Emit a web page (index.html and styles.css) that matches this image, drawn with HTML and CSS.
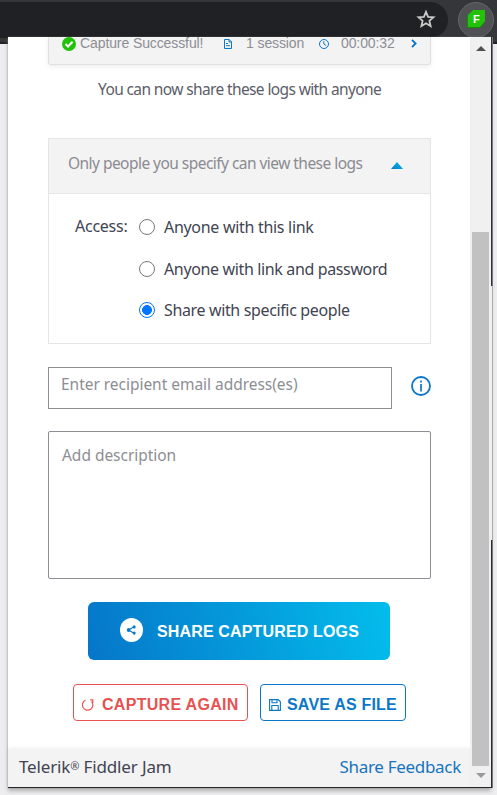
FILE: index.html
```
<!DOCTYPE html>
<html lang="en">
<head>
<meta charset="utf-8">
<title>Fiddler Jam</title>
<link rel="stylesheet" href="styles.css">
</head>
<body>
<header class="toolbar">
  <div class="omnibox">
    <svg class="star" viewBox="0 0 20 20" width="20" height="20"><path d="M10 2.8 12.1 7.8 17.5 8.3 13.4 11.8 14.6 17.1 10 14.3 5.4 17.1 6.6 11.8 2.5 8.3 7.9 7.8Z"/></svg>
  </div>
  <div class="extension">
    <svg viewBox="0 0 20 20" width="20" height="20"><path fill="#128a08" d="M6 2 1 7v12h13l4-5V2z"/><path fill="#22c20b" d="M7 1h12v11l-5 6H2V6z"/><text class="ext-letter" x="7" y="14">F</text></svg>
  </div>
</header>
<div class="page">
  <main class="popup">
    <div class="view">
      <div class="content">
        <section class="status">
          <svg class="ok" viewBox="0 0 14 14" width="14" height="14"><circle cx="7" cy="7" r="7" fill="#22c20b"/><path d="m3.5 7 2.5 2.5 4.6-4.8" fill="none" stroke="#fff" stroke-width="2"/></svg>
          <span class="captured">Capture Successful!</span>
          <svg class="doc" viewBox="0 0 8 10" width="8" height="10"><path d="M.5.5h4.7l2.3 2.4v6.6h-7zM5 .5V3h2.5M2 4.5h2M2 6.7h4" fill="none" stroke="#0a77c9"/></svg>
          <span class="sessions">1 session</span>
          <svg class="clock" viewBox="0 0 10 10" width="10" height="10"><circle cx="5" cy="5" r="4.5" fill="none" stroke="#0a77c9"/><path d="M4.8 2.2V5l2.4 1.6" fill="none" stroke="#0a77c9"/></svg>
          <span class="time">00:00:32</span>
          <svg class="chevron" viewBox="0 0 6 9" width="6" height="9"><path d="m1 .9 3.6 3.6L1 8.1" fill="none" stroke="#0a77c9" stroke-width="1.9"/></svg>
        </section>
        <p class="intro"><span>You can now share these logs with anyone</span></p>
        <section class="access">
          <div class="access-head"><span class="access-title">Only people you specify can view these logs</span>
            <svg class="caret" viewBox="0 0 12 7" width="12" height="7"><defs><linearGradient id="g" x1="0" y1="1" x2="1" y2="0"><stop stop-color="#0878cc"/><stop offset="1" stop-color="#04bdec"/></linearGradient></defs><path d="M6 0 12 7H0z" fill="url(#g)"/></svg>
          </div>
          <div class="access-body">
            <span class="access-label">Access:</span>
            <div class="options">
              <label class="option"><i class="radio"></i><span class="o1">Anyone with this link</span></label>
              <label class="option"><i class="radio"></i><span class="o2">Anyone with link and password</span></label>
              <label class="option"><i class="radio checked"></i><span class="o3">Share with specific people</span></label>
            </div>
          </div>
        </section>
        <div class="recipient">
          <div class="email"><span>Enter recipient email address(es)</span></div>
          <svg class="info" viewBox="0 0 20 20" width="20" height="20"><circle cx="10" cy="10" r="9" fill="none" stroke="#0a77c9" stroke-width="1.8"/><path d="M10 8v7.5M10 4.5v1.9" stroke="#0a77c9" stroke-width="1.7"/></svg>
        </div>
        <div class="description"><span>Add description</span></div>
        <button class="share">
          <svg viewBox="0 0 24 24" width="23" height="24" preserveAspectRatio="none"><circle cx="12" cy="12" r="12" fill="#fff"/><path d="m15 8.6-6 3.4 6 3.4" fill="none" stroke="#0878cc" stroke-width="1.2"/><circle cx="9" cy="12" r="1.9" fill="#0878cc"/><circle cx="14.8" cy="8.9" r="1.6" fill="#0878cc"/><circle cx="14.8" cy="15.1" r="1.6" fill="#0878cc"/></svg>
          <span>SHARE CAPTURED LOGS</span>
        </button>
        <div class="actions">
          <button class="again">
            <svg viewBox="0 0 12 12" width="12" height="12"><path d="M3.6 1.2A5.2 5.2 0 1 0 9.6 2.6M8.2.9h2.6v2.8" fill="none" stroke="#e85252" stroke-width="1.2"/></svg>
            <span>CAPTURE AGAIN</span>
          </button>
          <button class="save">
            <svg viewBox="0 0 12 12" width="12" height="12"><path d="M.6.6h8.6l2.2 2.2v8.6H.6zM3 .6v3.2h5V.6M2.8 11.4V6.5h6.4v4.9" fill="none" stroke="#0a77c9" stroke-width="1.1"/></svg>
            <span>SAVE AS FILE</span>
          </button>
        </div>
      </div>
      <footer class="footer"><span class="brand">Telerik<span class="reg">®</span> Fiddler Jam</span><a class="feedback">Share Feedback</a></footer>
    </div>
    <div class="scrollbar"><i class="up"></i><i class="thumb"></i><i class="down"></i></div>
  </main>
  <div class="edge"><i class="edge-top"></i><i class="edge-mid"></i><i class="edge-end"></i></div>
</div>
</body>
</html>
```
FILE: styles.css
```
* { box-sizing: border-box; }
body { margin: 0; width: 497px; height: 795px; overflow: hidden; background: #eeeef0; font-family: "Noto Sans", sans-serif; }
svg { display: block; flex: none; }
span, a { white-space: nowrap; }
button { font-family: "Liberation Sans", sans-serif; font-weight: 700; padding: 0; display: flex; align-items: center; }

.toolbar { height: 44px; background: #35363a; border-bottom: 2px solid #222326; display: flex; }
.omnibox { width: 448px; height: 36px; margin-top: 2px; background: #202124; border-radius: 0 18px 18px 0; display: flex; justify-content: flex-end; padding: 7px 12px 0 0; }
.star path { fill: none; stroke: #c8c8c8; stroke-width: 1.8; }
.extension { width: 36px; height: 36px; margin: 2px 0 0 10px; border-radius: 50%; background: #505155; border: 1px solid #66676b; padding: 6px 0 0 7px; }
.ext-letter { font: 700 11px "Liberation Sans", sans-serif; fill: #fff; }

.page { display: flex; margin: -7px 0 0 8px; position: relative; }
.popup { width: 483px; height: 751px; display: flex; background: #fff; border-bottom: 1px solid #26272b; box-shadow: 0 0 1px #777, 0 3px 4px #8889; }
.view { width: 462px; height: 750px; display: flex; flex-direction: column; }
.content { flex: 1; padding: 0 39px 0 40px; }
.edge { width: 2px; height: 751px; display: flex; flex-direction: column; }
.edge-top { height: 249px; background: #303136; border-right: 1px solid #77787b; }
.edge-mid { height: 254px; background: #f0f0f2; border-right: 1px solid #aaa; }
.edge-end { flex: 1; background: #292a2e; border-right: 1px solid #77787b; }

.status { height: 28px; display: flex; align-items: flex-start; background: #f3f3f3; border: 1px solid #e0e0e0; border-top: 0; border-radius: 0 0 3px 3px; box-shadow: 0 2px 5px #0001; padding-left: 13px; color: #8d8e94; font: 14px/14px "Liberation Sans", sans-serif; }
.status span { margin-top: -1px; }
.captured { width: 124px; margin-left: 4px; letter-spacing: -.1px; }
.doc { margin: 2px 0 0 20px; }
.sessions { width: 60px; margin-left: 14px; letter-spacing: -.1px; }
.clock { margin: 2px 0 0 13px; }
.time { width: 56px; margin-left: 12px; letter-spacing: -.1px; }
.chevron { margin: 2px 0 0 14px; }

.intro { margin: 13px 0 0; height: 22px; padding-left: 50px; color: #5c5d68; font-size: 15.5px; line-height: 22px; letter-spacing: -.62px; }
.access { margin-top: 38px; height: 206px; border: 1px solid #e5e5e5; }
.access-head { height: 55px; display: flex; background: #f3f3f3; border-bottom: 1px solid #e5e5e5; padding: 13px 27px 0 19px; justify-content: space-between; color: #8b8b91; font-size: 15.5px; line-height: 22px; letter-spacing: -.54px; }
.caret { margin-top: 10px; }
.access-body { display: flex; padding: 21px 0 0 26px; color: #424452; font-size: 16px; line-height: 22px; letter-spacing: -.36px; }
.access-label { width: 64px; letter-spacing: -.25px; }
.options { display: flex; flex-direction: column; gap: 20px; padding-top: 1px; }
.option { display: flex; height: 21.5px; }
.o1 { letter-spacing: -.3px; }
.radio { width: 16px; height: 16px; margin: 3px 9px 0 0; border: 1px solid #777; border-radius: 50%; background: #fff; }
.checked { border-color: #0075ff; background: radial-gradient(circle, #0075ff 4.6px, #fff 5.2px); }
.recipient { display: flex; justify-content: space-between; align-items: center; margin-top: 23px; height: 42px; }
.info { margin-bottom: 4px; }
.email { width: 344px; height: 42px; border: 1px solid #8d8d94; padding: 5px 0 0 12px; color: #8d8e94; font-size: 15.5px; line-height: 22px; letter-spacing: -.03px; }
.description { margin-top: 22px; height: 148px; border: 1px solid #8d8d94; border-radius: 2px; padding: 12px 0 0 13px; color: #8d8e94; font-size: 15.5px; line-height: 22px; letter-spacing: -.03px; }
.share { width: 302px; height: 58px; margin: 23px 0 0 40px; padding-left: 32px; border: 0; border-radius: 6px; background: linear-gradient(75deg, #0676c9, #03bdec); color: #fff; font-size: 16px; gap: 14px; letter-spacing: .15px; }
.share svg { margin-top: -2px; }
.share span { padding-top: 2px; }
.actions { display: flex; gap: 12px; margin: 24px 0 0 25px; }
.again, .save { height: 37px; background: #fff; border-radius: 4px; font-size: 16px; }
.again span, .save span { padding-top: 4px; }
.again { width: 175px; border: 1px solid #e85252; color: #e85252; padding-left: 8px; gap: 8px; letter-spacing: .3px; }
.save { width: 146px; border: 1px solid #0a77c9; color: #0a77c9; padding-left: 8px; gap: 6px; letter-spacing: .2px; }
.again svg, .save svg { margin-top: 4px; }
.again svg { margin-top: 5px; }
.footer { height: 38px; background: #f3f3f3; box-shadow: 0 -1px 4px #0001; display: flex; justify-content: space-between; padding: 0 9px 0 11px; font-size: 17px; line-height: 36px; color: #424452; letter-spacing: -.3px; }
.brand { letter-spacing: -.15px; }
.reg { display: inline-block; font-size: 11px; line-height: 12px; transform: translateY(-3px); }
.feedback { color: #1673be; }

.scrollbar { width: 21px; background: #f0f0f0; display: flex; flex-direction: column; align-items: center; padding: 9px 0 0; position: relative; }
.up { border: 5px solid transparent; border-top: 0; border-bottom: 5px solid #505050; }
.thumb { width: 17px; height: 534px; margin-top: 181px; background: #c1c1c1; }
.down { margin-top: 7px; border: 5px solid transparent; border-bottom: 0; border-top: 5px solid #999; }
```
